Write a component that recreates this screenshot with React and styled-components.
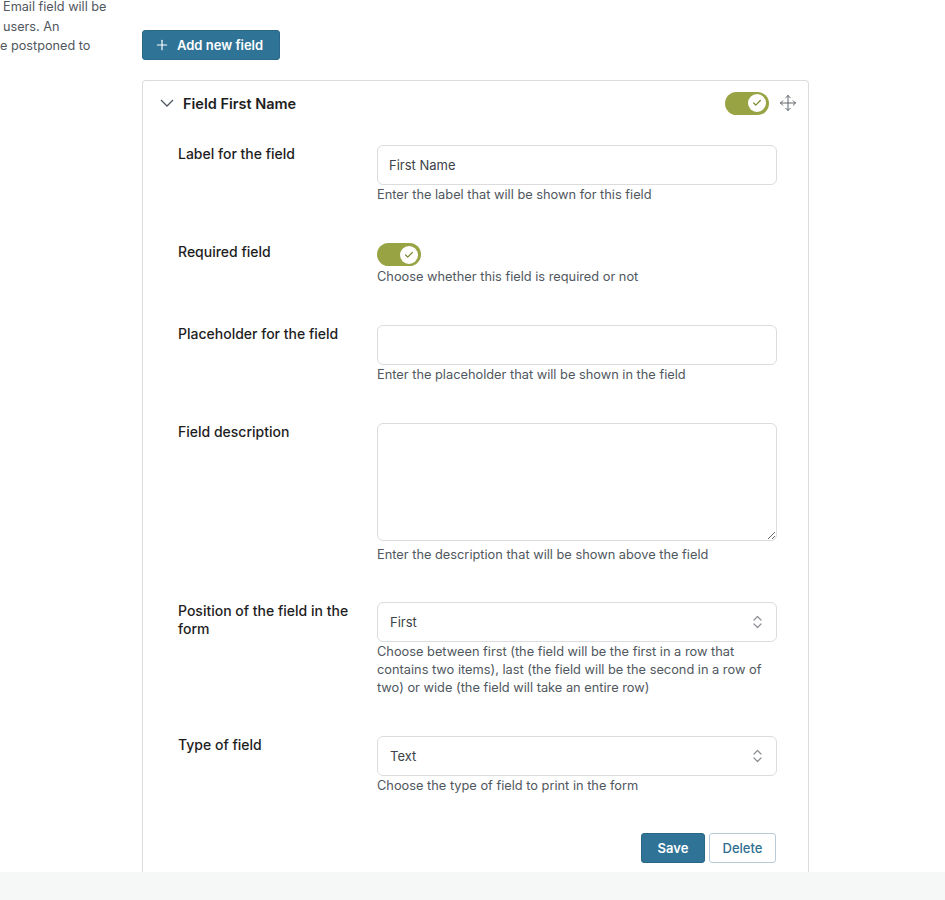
import React from 'react'
import styled, { createGlobalStyle } from 'styled-components'
import { Move, Check, Plus } from 'lucide-react'

const GlobalStyle = createGlobalStyle`
  body {
    margin: 0;
    background: #fff;
    font-family: Inter, "Noto Sans", sans-serif;
    color: #1e1e1e;
  }
  * { box-sizing: border-box; }
`

const Page = styled.div`
  display: flex;
  flex-direction: column;
  height: 900px;
  overflow: hidden;
`
const Main = styled.div`
  flex: 1;
  display: flex;
  overflow: hidden;
`
const Aside = styled.div`
  width: 142px;
  flex-shrink: 0;
  padding-left: 3px;
  margin-top: -3px;
  font-size: 12.7px;
  line-height: 19.5px;
  color: #50575e;
`
const AsideLine = styled.div`
  white-space: nowrap;
  margin-left: ${p => p.$shift || 0}px;
`
const Content = styled.div`
  padding-top: 30px;
  width: 667px;
`
const PrimaryButton = styled.button`
  display: inline-flex;
  align-items: center;
  gap: 7px;
  height: 30px;
  width: 138px;
  padding: 0 0 0 11px;
  border: 1px solid #2a6788;
  border-radius: 3px;
  background: #2f7396;
  color: #fff;
  font-family: inherit;
  font-size: 13px;
  font-weight: 600;
`
const Panel = styled.div`
  margin-top: 20px;
  border: 1px solid #dcdcde;
  border-bottom: none;
  border-radius: 4px 4px 0 0;
  background: #fff;
`
const Header = styled.div`
  height: 44px;
  display: flex;
  align-items: center;
  padding: 0 11px 0 17px;
`
const Title = styled.div`
  flex: 1;
  margin-left: 9px;
  font-size: 14.5px;
  font-weight: 600;
`
const Switch = styled.div`
  width: 44px;
  height: 23px;
  border-radius: 12px;
  background: #98a444;
  display: flex;
  align-items: center;
  justify-content: flex-end;
  padding-right: 3px;
`
const Knob = styled.div`
  width: 18px;
  height: 18px;
  border-radius: 50%;
  background: #fff;
  display: flex;
  align-items: center;
  justify-content: center;
  color: #7f8a35;
`
const MoveBox = styled.div`
  margin-left: 10px;
  display: flex;
  color: #50575e;
`
const Body = styled.div`
  padding: 20px 32px 9px 35px;
`
const Row = styled.div`
  display: grid;
  grid-template-columns: 199px 400px;
  margin-bottom: ${p => p.$after || 39}px;
`
const Label = styled.div`
  font-size: 14px;
  font-weight: 500;
  line-height: 18px;
  padding-right: 16px;
`
const Control = styled.div`
  display: flex;
  flex-direction: column;
  align-items: flex-start;
`
const Input = styled.input`
  width: 400px;
  height: 40px;
  border: 1px solid #dcdcde;
  border-radius: 6px;
  padding: 0 11px;
  font-family: inherit;
  font-size: 13px;
  color: #3c434a;
  outline: none;
`
const TextArea = styled.textarea`
  display: block;
  width: 400px;
  height: 118px;
  border: 1px solid #dcdcde;
  border-radius: 6px;
  font-family: inherit;
  outline: none;
`
const SelectBox = styled.div`
  width: 400px;
  height: 40px;
  border: 1px solid #dcdcde;
  border-radius: 6px;
  padding: 0 14px 0 12px;
  display: flex;
  align-items: center;
  justify-content: space-between;
  font-size: 13px;
  color: #3c434a;
`
const Help = styled.div`
  margin-top: ${p => p.$gap ?? 1}px;
  font-size: 12.8px;
  line-height: 18px;
  color: #50575e;
`
const Actions = styled.div`
  display: flex;
  justify-content: flex-end;
  gap: 4px;
  width: 598px;
  margin-top: -1px;
`
const SaveButton = styled.button`
  height: 30px;
  width: 64px;
  border: 1px solid #2a6788;
  border-radius: 3px;
  background: #2f7396;
  color: #fff;
  font-family: inherit;
  font-size: 13px;
  font-weight: 600;
`
const DeleteButton = styled.button`
  height: 30px;
  width: 67px;
  border: 1px solid #b9cbd7;
  border-radius: 3px;
  background: #fff;
  color: #2f6f91;
  font-family: inherit;
  font-size: 13px;
  font-weight: 500;
`
const Footer = styled.div`
  height: 28px;
  background: #f6f7f7;
`

const Toggle = () => (
  <Switch>
    <Knob><Check size={10} strokeWidth={3} /></Knob>
  </Switch>
)

const Chevron = () => (
  <svg width="14" height="8" viewBox="0 0 14 8" fill="none" stroke="#50575e" strokeWidth="1.3">
    <polyline points="1,1 7,7 13,1" />
  </svg>
)

const UpDown = () => (
  <svg width="9" height="14" viewBox="0 0 9 14" fill="none" stroke="#8c8f94" strokeWidth="1.2" strokeLinecap="round" strokeLinejoin="round">
    <polyline points="1,5 4.5,1.5 8,5" />
    <polyline points="1,9 4.5,12.5 8,9" />
  </svg>
)

const App = () => {
  return (
    <Page>
      <GlobalStyle />
      <Main>
        <Aside>
          <AsideLine>Email field will be</AsideLine>
          <AsideLine>users. An</AsideLine>
          <AsideLine $shift={-3}>e postponed to</AsideLine>
        </Aside>
        <Content>
          <PrimaryButton><Plus size={16} strokeWidth={1.8} />Add new field</PrimaryButton>
          <Panel>
            <Header>
              <Chevron />
              <Title>Field First Name</Title>
              <Toggle />
              <MoveBox><Move size={18} strokeWidth={1.2} /></MoveBox>
            </Header>
            <Body>
              <Row>
                <Label>Label for the field</Label>
                <Control>
                  <Input defaultValue="First Name" />
                  <Help>Enter the label that will be shown for this field</Help>
                </Control>
              </Row>
              <Row $after={39}>
                <Label>Required field</Label>
                <Control>
                  <Toggle />
                  <Help $gap={2}>Choose whether this field is required or not</Help>
                </Control>
              </Row>
              <Row>
                <Label>Placeholder for the field</Label>
                <Control>
                  <Input />
                  <Help>Enter the placeholder that will be shown in the field</Help>
                </Control>
              </Row>
              <Row $after={38}>
                <Label>Field description</Label>
                <Control>
                  <TextArea />
                  <Help $gap={5}>Enter the description that will be shown above the field</Help>
                </Control>
              </Row>
              <Row>
                <Label>Position of the field in the form</Label>
                <Control>
                  <SelectBox>First<UpDown /></SelectBox>
                  <Help>Choose between first (the field will be the first in a row that contains two items), last (the field will be the second in a row of two) or wide (the field will take an entire row)</Help>
                </Control>
              </Row>
              <Row>
                <Label>Type of field</Label>
                <Control>
                  <SelectBox>Text<UpDown /></SelectBox>
                  <Help>Choose the type of field to print in the form</Help>
                </Control>
              </Row>
              <Actions>
                <SaveButton>Save</SaveButton>
                <DeleteButton>Delete</DeleteButton>
              </Actions>
            </Body>
          </Panel>
        </Content>
      </Main>
      <Footer />
    </Page>
  )
}

export default App
